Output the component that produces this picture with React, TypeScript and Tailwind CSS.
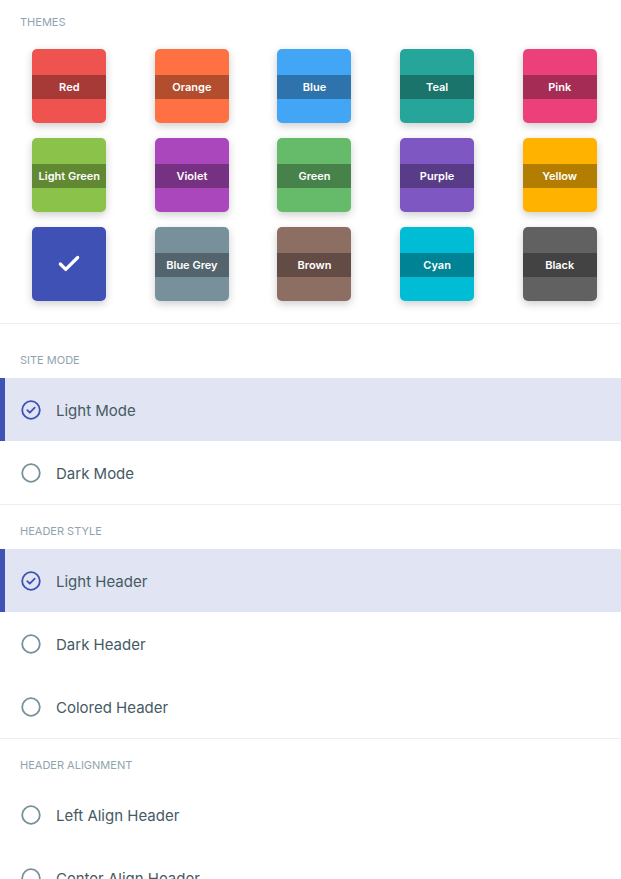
import { Check } from "lucide-react";

type Theme = { name: string; color: string; selected?: boolean };

const themes: Theme[] = [
  { name: "Red", color: "bg-[#ef5350]" },
  { name: "Orange", color: "bg-[#ff7043]" },
  { name: "Blue", color: "bg-[#42a5f5]" },
  { name: "Teal", color: "bg-[#26a69a]" },
  { name: "Pink", color: "bg-[#ec407a]" },
  { name: "Light Green", color: "bg-[#8bc34a]" },
  { name: "Violet", color: "bg-[#ab47bc]" },
  { name: "Green", color: "bg-[#66bb6a]" },
  { name: "Purple", color: "bg-[#7e57c2]" },
  { name: "Yellow", color: "bg-[#ffb300]" },
  { name: "Indigo", color: "bg-[#3f51b5]", selected: true },
  { name: "Blue Grey", color: "bg-[#78909c]" },
  { name: "Brown", color: "bg-[#8d6e63]" },
  { name: "Cyan", color: "bg-[#00bcd4]" },
  { name: "Black", color: "bg-[#616161]" },
];

function Swatch({ theme }: { theme: Theme }) {
  return (
    <div
      className={`w-[74px] h-[74px] rounded-[5px] overflow-hidden flex items-center justify-center shadow-[0_3px_8px_rgba(0,0,0,0.2)] ${theme.color}`}
    >
      {theme.selected ? (
        <Check className="w-[26px] h-[26px] text-white" strokeWidth={3} />
      ) : (
        <div className="w-full h-6 mt-[2px] bg-black/30 flex items-center justify-center text-white text-[11px] font-semibold">
          {theme.name}
        </div>
      )}
    </div>
  );
}

function SectionLabel({ children, spacing }: { children: string; spacing: string }) {
  return (
    <div className={`px-5 ${spacing} text-[11px] uppercase text-[#90a4ae] leading-[14px]`}>
      {children}
    </div>
  );
}

function Option({ label, active }: { label: string; active?: boolean }) {
  return (
    <div
      className={`h-[63px] flex items-center gap-[15px] ${
        active ? "bg-[#e1e4f2] border-l-[5px] border-[#3f51b5] pl-[16px]" : "pl-[21px]"
      }`}
    >
      {active ? (
        <svg width="20" height="20" viewBox="0 0 20 20" fill="none">
          <circle cx="10" cy="10" r="8.8" stroke="#3f51b5" strokeWidth="1.8" />
          <path d="M6.3 10.2l2.5 2.5 4.9-5" stroke="#3f51b5" strokeWidth="1.8" strokeLinecap="round" strokeLinejoin="round" />
        </svg>
      ) : (
        <svg width="20" height="20" viewBox="0 0 20 20" fill="none">
          <circle cx="10" cy="10" r="8.8" stroke="#78909c" strokeWidth="1.8" />
        </svg>
      )}
      <span className="text-[15px] text-[#455a64] pt-[3px]">{label}</span>
    </div>
  );
}

export default function App() {
  return (
    <div className="w-[621px] h-[879px] overflow-hidden bg-white" style={{ fontFamily: "Inter, 'Open Sans', sans-serif" }}>
      {/* Themes */}
      <div className="border-b border-[#eeeeee] pb-[22px]">
        <SectionLabel spacing="pt-[15px]">Themes</SectionLabel>
        <div className="grid grid-cols-5 gap-y-[15px] pt-[20px] pl-[8px]">
          {themes.map((t) => (
            <div key={t.name} className="flex justify-center">
              <Swatch theme={t} />
            </div>
          ))}
        </div>
      </div>

      {/* Site mode */}
      <div className="border-b border-[#eeeeee]">
        <SectionLabel spacing="pt-[29px] pb-[11px]">Site Mode</SectionLabel>
        <Option label="Light Mode" active />
        <Option label="Dark Mode" />
      </div>

      {/* Header style */}
      <div className="border-b border-[#eeeeee]">
        <SectionLabel spacing="pt-[19px] pb-[11px]">Header Style</SectionLabel>
        <Option label="Light Header" active />
        <Option label="Dark Header" />
        <Option label="Colored Header" />
      </div>

      {/* Header alignment */}
      <div>
        <SectionLabel spacing="pt-[19px] pb-[11px]">Header Alignment</SectionLabel>
        <Option label="Left Align Header" />
        <Option label="Center Align Header" />
      </div>
    </div>
  );
}
